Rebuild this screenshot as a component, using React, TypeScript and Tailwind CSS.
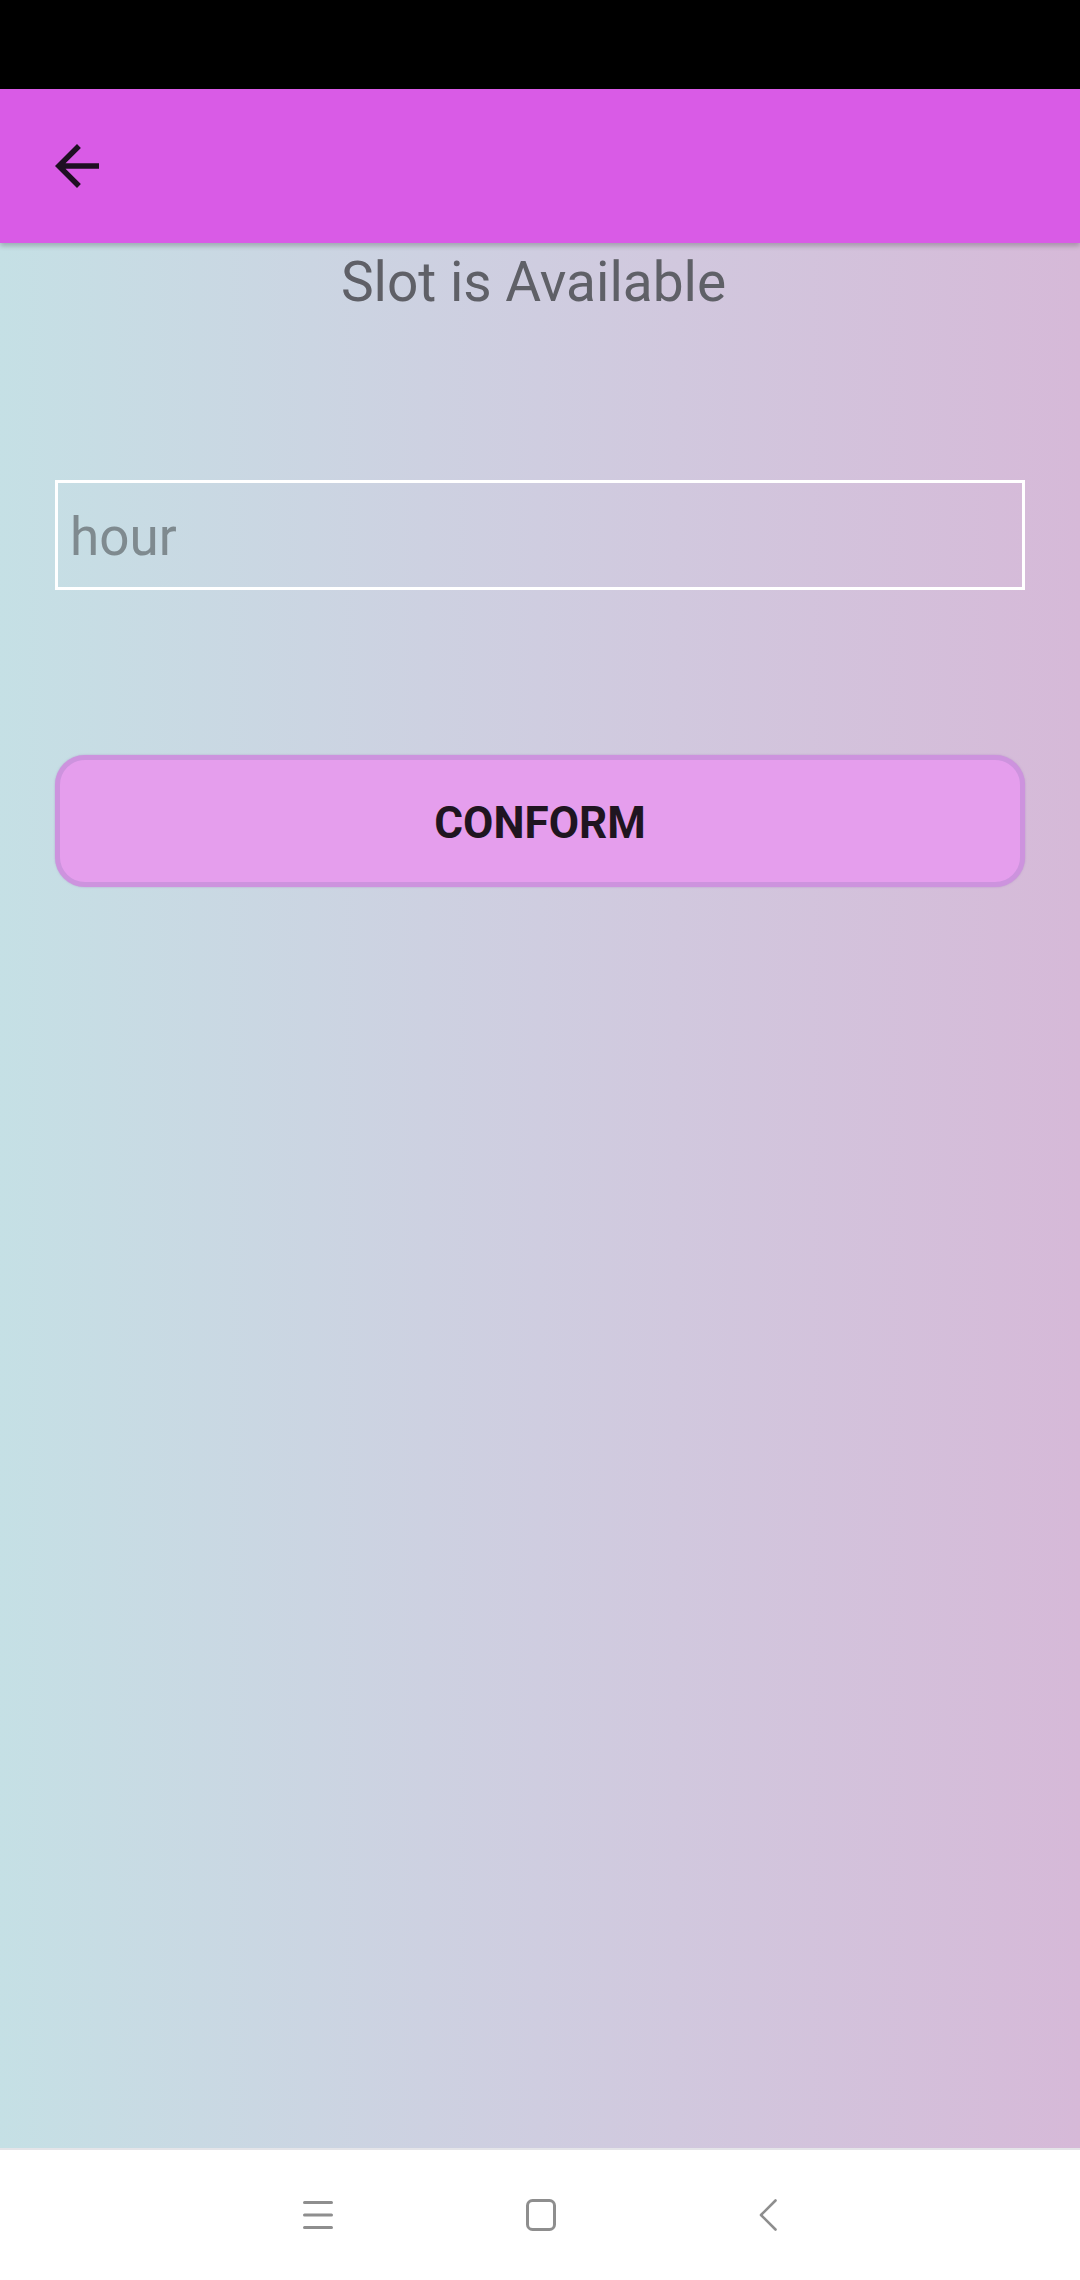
import React from "react";

export default function App() {
  return (
    <div
      className="w-[1080px] h-[2280px] flex flex-col overflow-hidden"
      style={{ fontFamily: "Roboto, 'Noto Sans', Arial, sans-serif" }}
    >
      {/* status bar */}
      <div className="h-[89px] bg-black shrink-0" />

      {/* app bar */}
      <div className="h-[154px] shrink-0 bg-[#d95be6] flex items-center pl-[44px] relative z-10 shadow-[0_3px_5px_rgba(0,0,0,0.22)]">
        <svg width="66" height="66" viewBox="0 0 24 24" fill="#1e0f22">
          <path d="M20 11H7.83l5.59-5.59L12 4l-8 8 8 8 1.41-1.41L7.83 13H20v-2z" />
        </svg>
      </div>

      {/* content */}
      <div className="flex-1 bg-gradient-to-r from-[#c5e0e5] via-[#cfcde0] to-[#d6b9d8] flex flex-col">
        <div className="mt-[6px] pr-[13px] text-center text-[55px] leading-[66px] text-[#5f6067]">
          Slot is Available
        </div>

        <div className="mt-[165px] mx-[55px] h-[110px] border-[3px] border-white flex items-center pl-[12px] pt-[4px]">
          <input
            className="w-full bg-transparent outline-none text-[53px] leading-[60px] text-[#5f6067] placeholder:text-[#7f8a8f]"
            placeholder="hour"
          />
        </div>

        <button className="mt-[165px] mx-[55px] h-[132px] rounded-[30px] border-[5px] border-[#cd93de] bg-[#e59eed] flex items-center justify-center pt-[3px] shadow-[0_0_2px_rgba(160,110,190,0.5)]">
          <span className="text-[44px] font-bold leading-[52px] text-[#1f1520]">
            CONFORM
          </span>
        </button>
      </div>

      {/* nav bar */}
      <div className="h-[132px] shrink-0 bg-white border-t-[2px] border-[#e4e4e8] flex items-center justify-center">
        <svg width="30" height="30" viewBox="0 0 30 30" className="shrink-0">
          <line x1="1.5" y1="2.5" x2="28.5" y2="2.5" stroke="#8e8e8e" strokeWidth="3" strokeLinecap="round" />
          <line x1="1.5" y1="15" x2="28.5" y2="15" stroke="#8e8e8e" strokeWidth="3" strokeLinecap="round" />
          <line x1="1.5" y1="27.5" x2="28.5" y2="27.5" stroke="#8e8e8e" strokeWidth="3" strokeLinecap="round" />
        </svg>
        <svg width="30" height="32" viewBox="0 0 30 32" className="shrink-0 ml-[193px]">
          <rect x="1.5" y="1.5" width="27" height="29" rx="5" fill="none" stroke="#8e8e8e" strokeWidth="3" />
        </svg>
        <svg width="18" height="32" viewBox="0 0 18 32" className="shrink-0 ml-[203px]">
          <polyline points="16.5,1.5 2,16 16.5,30.5" fill="none" stroke="#8e8e8e" strokeWidth="2.6" strokeLinecap="round" strokeLinejoin="round" />
        </svg>
      </div>
    </div>
  );
}
